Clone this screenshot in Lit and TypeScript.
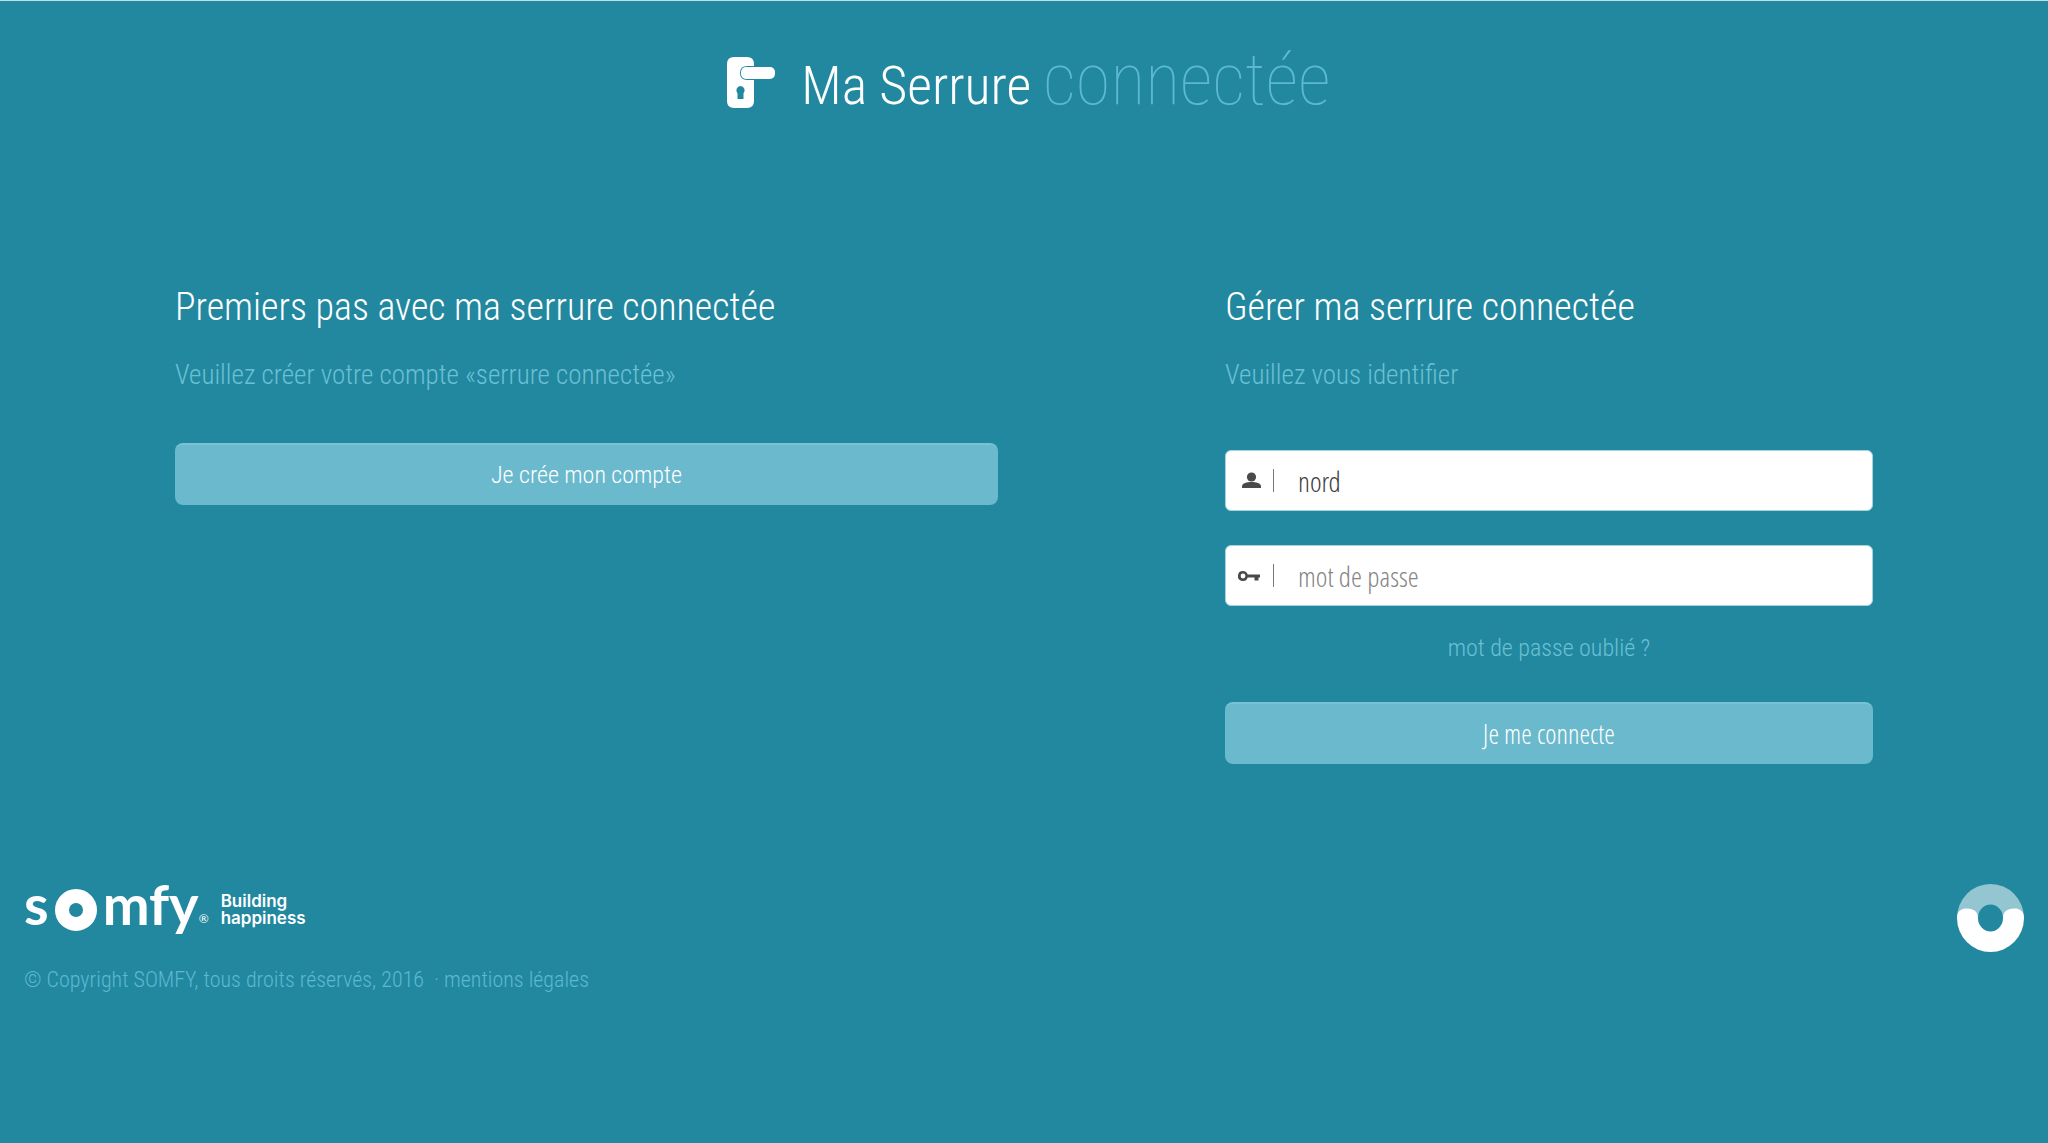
import { LitElement, html, css, svg } from "lit";
import { customElement, property } from "lit/decorators.js";

const lockIcon = svg`
  <path fill="#fff" d="M7 0H20Q27 0 27 7V9H20Q13 9 13 16Q13 23 20 23H27V44Q27 51 20 51H7Q0 51 0 44V7Q0 0 7 0Z"/>
  <rect x="14" y="10" width="34" height="12" rx="5" fill="#fff"/>
  <path fill="#22889f" d="M13.500 29A4.500 4.500 0 0 1 16.500 36.500V42H10.500V36.500A4.500 4.500 0 0 1 13.500 29Z"/>`;

const userIcon = svg`
  <circle cx="14.500" cy="8" r="4.600"/>
  <path d="M5 19V17.500C5 14 10 13 14.500 13S24 14 24 17.500V19Z"/>`;

const keyIcon = svg`
  <path fill-rule="evenodd" d="M6 7A5 5 0 0 1 10.700 10.500H23V13.500H21.500V16.500H17.500V13.500H10.700A5 5 0 1 1 6 7ZM6 9.600A2.400 2.400 0 1 0 6 14.400A2.400 2.400 0 1 0 6 9.600Z"/>`;

@customElement("login-field")
export class LoginField extends LitElement {
  @property() label = "";
  @property() name = "";
  @property() type = "text";
  @property() value = "";
  @property() placeholder = "";
  @property() icon = "user";

  static styles = css`
    :host {
      display: block;
    }
    .field {
      display: flex;
      align-items: center;
      box-sizing: border-box;
      height: 61px;
      padding-left: 11px;
      border: 1px solid #a5d3df;
      border-radius: 6px;
      background: #fff;
    }
    .icon {
      flex: none;
      width: 24px;
      height: 24px;
      fill: #4a4a4a;
    }
    .divider {
      flex: none;
      width: 1px;
      height: 23px;
      margin: 0 24px 0 12px;
      background: #777;
    }
    .input {
      flex: 1;
      min-width: 0;
      padding: 0;
      border: 0;
      outline: 0;
      background: none;
      color: #3c3c3c;
      font: 28px/40px "Open Sans Condensed Light", "Roboto Condensed", sans-serif;
    }
    .input::placeholder {
      color: #858585;
      opacity: 1;
    }
  `;

  render() {
    return html`
      <div class="field">
        <svg class="icon" viewBox="0 0 24 24" aria-hidden="true">
          ${this.icon === "key" ? keyIcon : userIcon}
        </svg>
        <span class="divider"></span>
        <input
          class="input"
          aria-label=${this.label}
          name=${this.name}
          type=${this.type}
          .value=${this.value}
          placeholder=${this.placeholder}
        />
      </div>
    `;
  }
}

@customElement("app-root")
export class AppRoot extends LitElement {
  static styles = css`
    :host {
      display: block;
      box-sizing: border-box;
      min-height: 100vh;
      border-top: 1px solid #c3dfe6;
      background: #22889f;
      color: #fff;
      font-family: "Roboto Condensed", Roboto, sans-serif;
      font-weight: 300;
    }
    .header {
      display: flex;
      justify-content: center;
      align-items: center;
      gap: 25px;
      padding: 39px 24px 0 34px;
    }
    .lock {
      width: 49px;
      height: 52px;
    }
    .title {
      display: flex;
      align-items: baseline;
      gap: 12px;
      margin: 0;
      font-size: 54px;
      line-height: 80px;
      font-weight: 300;
    }
    .thin {
      color: #5cb9d1;
      font-size: 72px;
      font-weight: 100;
    }
    .main {
      display: grid;
      grid-template-columns: 823fr 648fr;
      column-gap: 227px;
      padding: 157px 175px 0;
    }
    .heading {
      margin: 0;
      font-size: 38px;
      line-height: 48px;
      font-weight: 300;
    }
    .lead {
      margin: 26px 0 0;
      color: #6bc0d5;
      font-size: 27px;
      line-height: 36px;
    }
    .button {
      display: block;
      width: 100%;
      height: 62px;
      padding: 0;
      border: 0;
      border-top: 2px solid #78c2d5;
      border-radius: 8px;
      background: #6ab9cd;
      color: #fff;
      cursor: pointer;
    }
    .create {
      margin-top: 50px;
      font: 300 24px/32px "Roboto Condensed", Roboto, sans-serif;
    }
    .connect {
      font: 27px/32px "Open Sans Condensed Light", "Roboto Condensed", sans-serif;
    }
    .form {
      display: flex;
      flex-direction: column;
      margin-top: 57px;
    }
    .password {
      margin-top: 34px;
    }
    .forgot {
      align-self: center;
      margin: 24px 0 36px;
      color: #6bc0d5;
      font-size: 24px;
      line-height: 36px;
      text-decoration: none;
    }
    .footer {
      display: flex;
      justify-content: space-between;
      align-items: flex-start;
      padding: 120px 24px 0;
    }
    .brand {
      display: flex;
      align-items: center;
      box-sizing: border-box;
      height: 52px;
      padding-bottom: 12px;
      color: #fff;
      text-decoration: none;
      font: 700 56px/64px Lato, sans-serif;
    }
    .ring {
      width: 42px;
      height: 42px;
      margin: 12px 6px 0;
    }
    .registered {
      margin-top: 30px;
      font: 12px/16px Lato, sans-serif;
    }
    .tagline {
      margin: 12px 0 0 12px;
      font: 600 17px/17px Inter, sans-serif;
    }
    .legal {
      margin: 28px 0 0;
      color: #5cb9d1;
      font-size: 22px;
      line-height: 32px;
    }
    .mentions {
      color: inherit;
      text-decoration: none;
    }
    .badge {
      width: 67px;
      height: 68px;
    }
  `;

  render() {
    return html`
      <header class="header">
        <svg class="lock" viewBox="0 0 49 52" aria-hidden="true">${lockIcon}</svg>
        <h1 class="title">Ma Serrure <span class="thin">connectée</span></h1>
      </header>

      <main class="main">
        <section>
          <h2 class="heading">Premiers pas avec ma serrure connectée</h2>
          <p class="lead">Veuillez créer votre compte «serrure connectée»</p>
          <button class="button create" type="button">Je crée mon compte</button>
        </section>

        <section>
          <h2 class="heading">Gérer ma serrure connectée</h2>
          <p class="lead">Veuillez vous identifier</p>
          <form class="form" @submit=${(e: Event) => e.preventDefault()}>
            <login-field label="identifiant" name="user" value="nord"></login-field>
            <login-field
              class="password"
              label="mot de passe"
              name="password"
              type="password"
              placeholder="mot de passe"
              icon="key"
            ></login-field>
            <a class="forgot" href="#">mot de passe oublié ?</a>
            <button class="button connect" type="submit">Je me connecte</button>
          </form>
        </section>
      </main>

      <footer class="footer">
        <div>
          <a class="brand" href="#" aria-label="Somfy">
            <span>s</span>
            <svg class="ring" viewBox="0 0 42 42" aria-hidden="true">
              <circle cx="21" cy="21" r="14" fill="none" stroke="#fff" stroke-width="14" />
            </svg>
            <span>mfy</span>
            <span class="registered">®</span>
            <span class="tagline">Building<br />happiness</span>
          </a>
          <p class="legal">
            © Copyright SOMFY, tous droits réservés, 2016 &nbsp;·
            <a class="mentions" href="#">mentions légales</a>
          </p>
        </div>
        <svg class="badge" viewBox="0 0 67 68" aria-hidden="true">
          <path
            fill="#93c6d1"
            fill-rule="evenodd"
            d="M33.500 0A33.500 34 0 0 1 67 34H0A33.500 34 0 0 1 33.500 0ZM33.500 20.500A12.500 13.500 0 0 0 21 34H46A12.500 13.500 0 0 0 33.500 20.500Z"
          />
          <path
            fill="#fff"
            d="M0 34C0 27 4 24.500 10 24.500C17 24.500 21 28 21 34A12.500 13.500 0 0 0 46 34C46 28 50 24.500 57 24.500C63 24.500 67 27 67 34A33.500 34 0 0 1 0 34Z"
          />
        </svg>
      </footer>
    `;
  }
}
